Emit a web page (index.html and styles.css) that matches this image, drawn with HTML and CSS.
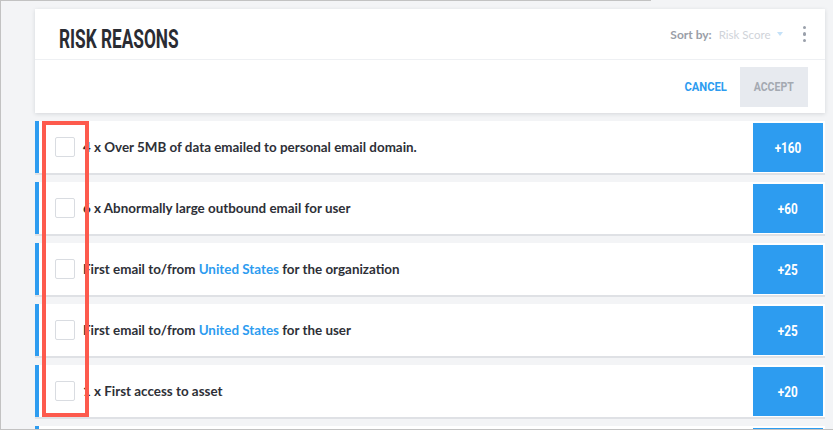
FILE: index.html
```html
<!DOCTYPE html>
<html lang="en">
<head>
    <meta charset="UTF-8">
    <title>Risk Reasons</title>
    <link rel="stylesheet" href="styles.css">
</head>
<body>
    <div class="frame">
        <div class="card">
            <div class="card-top">
                <h1 class="title"><span class="cond">RISK REASONS</span></h1>
                <div class="sort">
                    <span class="sort-label">Sort by:</span>
                    <span class="sort-value">Risk Score</span>
                    <span class="caret"></span>
                </div>
                <div class="kebab"><i></i><i></i><i></i></div>
            </div>
            <div class="card-actions">
                <button class="btn-cancel"><span class="cond">CANCEL</span></button>
                <button class="btn-accept"><span class="cond">ACCEPT</span></button>
            </div>
        </div>

        <div class="list">
            <div class="row">
                <span class="check"></span>
                <span class="reason">4 x Over 5MB of data emailed to personal email domain.</span>
                <span class="score"><span class="cond">+160</span></span>
            </div>
            <div class="row">
                <span class="check"></span>
                <span class="reason">6 x Abnormally large outbound email for user</span>
                <span class="score"><span class="cond">+60</span></span>
            </div>
            <div class="row">
                <span class="check"></span>
                <span class="reason">First email to/from <a class="link">United States</a> for the organization</span>
                <span class="score"><span class="cond">+25</span></span>
            </div>
            <div class="row">
                <span class="check"></span>
                <span class="reason">First email to/from <a class="link">United States</a> for the user</span>
                <span class="score"><span class="cond">+25</span></span>
            </div>
            <div class="row">
                <span class="check"></span>
                <span class="reason">1 x First access to asset</span>
                <span class="score"><span class="cond">+20</span></span>
            </div>
            <!-- next row, only its top edge shows -->
            <div class="row">
                <span class="check"></span>
                <span class="score"></span>
            </div>
        </div>

        <div class="highlight"></div>
    </div>
</body>
</html>
```

FILE: styles.css
```css
* {
    margin: 0;
    padding: 0;
    box-sizing: border-box;
}

body {
    font-family: Lato, 'Open Sans', sans-serif;
    color: #2c2e35;
    overflow: hidden;
}

.frame {
    position: relative;
    width: 833px;
    height: 430px;
    overflow: hidden;
    padding: 9px 8px 0 34px;
    border-left: 1px solid #c2c2c2;
    border-bottom: 1px solid #c2c2c2;
    background: linear-gradient(#c2c2c2, #c2c2c2) top left / 650px 1px no-repeat, #f3f4f6;
}

.cond {
    display: inline-block;
    transform: scaleX(0.72);
    transform-origin: center;
    white-space: nowrap;
}

/* header card */
.card {
    background: #fff;
    box-shadow: 0 1px 4px rgba(30, 40, 60, 0.14);
}

.card-top {
    height: 51px;
    display: flex;
    align-items: center;
    padding: 0 19px 0 24px;
    border-bottom: 1px solid #eef0f3;
}

.title {
    font-family: Roboto, sans-serif;
    font-size: 25px;
    font-weight: 700;
    color: #2a2c33;
    flex: 1;
    line-height: 1;
    margin-top: 11px;
}

.title .cond {
    transform-origin: left center;
    transform: scaleX(0.69);
}

.sort {
    display: flex;
    align-items: center;
    font-size: 12px;
}

.sort-label {
    color: #9a9ea7;
    font-weight: 700;
    margin-right: 7px;
}

.sort-value {
    color: #cfd3d9;
    font-size: 11.5px;
}

.caret {
    width: 0;
    height: 0;
    margin-left: 6px;
    border-left: 3.5px solid transparent;
    border-right: 3.5px solid transparent;
    border-top: 4px solid #c4e1f8;
}

.kebab {
    display: flex;
    flex-direction: column;
    gap: 3px;
    margin-left: 20px;
}

.kebab i {
    width: 3.5px;
    height: 3.5px;
    border-radius: 50%;
    background: #9aa0ab;
}

.card-actions {
    height: 53px;
    display: flex;
    align-items: center;
    justify-content: flex-end;
    gap: 10px;
    padding-right: 17px;
}

.card-actions button {
    border: none;
    font-family: Roboto, sans-serif;
    font-size: 13px;
    font-weight: 700;
    background: none;
}

.btn-cancel {
    color: #2d9cf0;
}

.btn-cancel .cond {
    transform: scaleX(0.86);
}

.btn-accept .cond {
    transform: scaleX(0.81);
}

.btn-accept {
    width: 68px;
    height: 40px;
    background: #e7eaef !important;
    color: #a4a9b1;
}

/* reason rows */
.list {
    margin-top: 8px;
}

.row {
    height: 52px;
    display: flex;
    align-items: center;
    background: #fff;
    border-left: 4px solid #2d9cf0;
    box-shadow: 0 2px 0 #dfe1e5;
    margin-bottom: 9px;
    padding-left: 16px;
}

.check {
    width: 20px;
    height: 20px;
    border: 1px solid #d9dce1;
    border-radius: 2px;
    margin-right: 8px;
    flex-shrink: 0;
}

.reason {
    font-size: 13.4px;
    font-weight: 700;
    color: #2e3037;
}

.link {
    color: #2d9cf0;
}

.score {
    margin: 2px 2px 1px auto;
    align-self: stretch;
    width: 70px;
    background: #2d9cf0;
    color: #fff;
    display: flex;
    align-items: center;
    justify-content: center;
    font-family: Roboto, sans-serif;
    font-size: 15px;
    font-weight: 700;
}

.score .cond {
    transform: scaleX(0.78);
}

/* annotation box drawn over the checkbox column */
.highlight {
    position: absolute;
    left: 41px;
    top: 121px;
    width: 47px;
    height: 296px;
    border: 4px solid #fd5a4d;
}
```
